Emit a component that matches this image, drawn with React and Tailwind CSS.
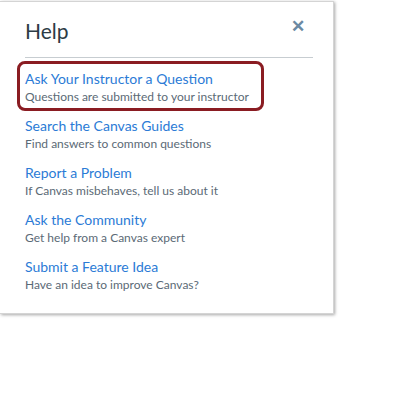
import React from 'react';

const links = [
  ['Ask Your Instructor a Question', 'Questions are submitted to your instructor'],
  ['Search the Canvas Guides', 'Find answers to common questions'],
  ['Report a Problem', 'If Canvas misbehaves, tell us about it'],
  ['Ask the Community', 'Get help from a Canvas expert'],
  ['Submit a Feature Idea', 'Have an idea to improve Canvas?'],
];

export default function App() {
  return (
    <div className="w-[409px] h-[394px] bg-white" style={{ fontFamily: 'Lato, "Open Sans", sans-serif' }}>
      <div className="w-[334px] h-[313px] mt-[1px] bg-white border-t border-r border-b border-[#d4d4d4] shadow-[1px_1px_3px_rgba(0,0,0,0.35)] pl-[25px] pr-[20px]">
        <div className="flex items-center justify-between h-[56px] border-b border-[#c7cdd1]">
          <h1 className="text-[21px] text-[#2d3b45] leading-none pt-[2px]">Help</h1>
          <span className="text-[#6b8aa3] text-[17px] font-bold leading-none mr-[8px] -mt-[8px]">✕</span>
        </div>
        <ul className="mt-[3px] -ml-[8px]">
          {links.map(([title, desc], i) => (
            <li
              key={title}
              className={
                i === 0
                  ? 'w-[247px] h-[50px] border-[3px] border-[#8a1c22] rounded-[8px] pl-[5px] pt-[5px] mb-[2px] whitespace-nowrap'
                  : 'pl-[8px] h-[47px] pt-[3px] whitespace-nowrap'
              }
            >
              <div className="text-[14px] leading-[19px] text-[#2b7bd6]">{title}</div>
              <div className="text-[12px] leading-[18px] text-[#5b6a76]">{desc}</div>
            </li>
          ))}
        </ul>
      </div>
    </div>
  );
}
